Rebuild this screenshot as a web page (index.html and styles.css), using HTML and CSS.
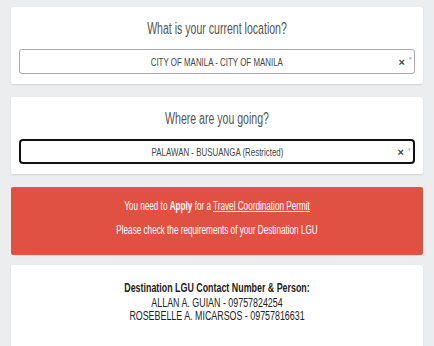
FILE: index.html
```html
<!DOCTYPE html>
<html lang="en">
<head>
  <meta charset="UTF-8">
  <meta name="viewport" content="width=device-width, initial-scale=1.0">
  <title>Travel Check</title>
  <link rel="stylesheet" href="styles.css">
</head>
<body>
  <div class="card">
    <div class="card-title">What is your current location?</div>
    <div class="select">
      <span class="select-text">CITY OF MANILA - CITY OF MANILA</span>
      <span class="select-clear">&times;</span>
      <span class="select-arrow">&#9662;</span>
    </div>
  </div>

  <div class="card">
    <div class="card-title">Where are you going?</div>
    <div class="select select-focus">
      <span class="select-text">PALAWAN - BUSUANGA (Restricted)</span>
      <span class="select-clear">&times;</span>
      <span class="select-arrow">&#9662;</span>
    </div>
  </div>

  <div class="alert">
    <p>You need to <b>Apply</b> for a <a href="#">Travel Coordination Permit</a></p>
    <p>Please check the requirements of your Destination LGU</p>
  </div>

  <div class="card contact">
    <p class="contact-head">Destination LGU Contact Number &amp; Person:</p>
    <p>ALLAN A. GUIAN - 09757824254</p>
    <p>ROSEBELLE A. MICARSOS - 09757816631</p>
  </div>
</body>
</html>
```

FILE: styles.css
```css
body {
  margin: 0;
  padding: 7px 11px 0;
  background-color: #ecedef;
  font-family: 'Liberation Sans', Arial, sans-serif;
  color: #444;
}
.card {
  background-color: #fff;
  box-shadow: 0 1px 2px rgba(0, 0, 0, 0.12);
  border-radius: 2px;
  padding: 10px 8px 10px;
  margin-bottom: 13px;
}
.card-title {
  font-size: 16px;
  line-height: 22px;
  color: #555;
  text-align: center;
  margin: 1px 0 9px;
  transform: scaleX(0.66);
}
.select {
  position: relative;
  height: 25px;
  border: 1px solid #aaa;
  border-radius: 3px;
  box-sizing: border-box;
  display: flex;
  align-items: center;
  justify-content: center;
}
.select-focus {
  border: 2px solid #111;
  border-radius: 4px;
}
.select-text {
  font-size: 11px;
  color: #444;
  transform: scaleX(0.72);
}
.select-clear {
  position: absolute;
  right: 9px;
  top: 50%;
  transform: translateY(-50%);
  font-size: 11px;
  font-weight: bold;
  color: #444;
}
.select-arrow {
  position: absolute;
  right: 2px;
  top: 5px;
  font-size: 5px;
  color: #aaa;
}
.alert {
  background-color: #e05141;
  color: #fff;
  border-radius: 2px;
  padding: 10px 0 16px;
  margin-bottom: 10px;
  text-align: center;
  font-size: 12px;
}
.alert p {
  margin: 0 0 6px;
  line-height: 18px;
  transform: scaleX(0.68);
}
.alert p:last-child {
  margin-bottom: 0;
}
.alert a {
  color: #fff;
}
.contact {
  padding-top: 17px;
  padding-bottom: 26px;
  text-align: center;
  font-size: 12px;
  color: #222;
}
.contact p {
  margin: 0;
  line-height: 13.5px;
  transform: scaleX(0.74);
}
.contact-head {
  font-weight: bold;
  margin-bottom: 1px !important;
}
```
